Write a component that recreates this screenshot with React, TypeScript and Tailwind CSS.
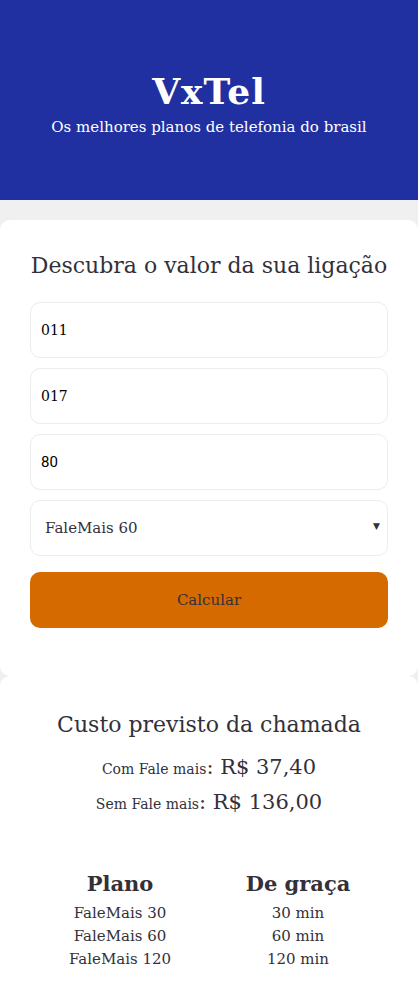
import React, { useState } from 'react';

const plans = [
  { name: 'FaleMais 30', free: '30 min' },
  { name: 'FaleMais 60', free: '60 min' },
  { name: 'FaleMais 120', free: '120 min' },
];

export default function App() {
  const [origin, setOrigin] = useState('011');
  const [destiny, setDestiny] = useState('017');
  const [minutes, setMinutes] = useState('80');
  const [plan, setPlan] = useState('60');

  return (
    <div className="min-h-[999px] bg-[#f0f0f0] font-['DejaVu_Serif',serif] text-[#33303a]">
      <header className="h-[200px] bg-[#2130a1] flex flex-col items-center justify-center text-white pt-[6px]">
        <h1 className="text-[36px] leading-[44px] font-bold tracking-[1px]">VxTel</h1>
        <p className="text-[15px] leading-[20px] mt-[4px]">Os melhores planos de telefonia do brasil</p>
      </header>

      <main className="pt-[20px]">
        <section className="bg-white rounded-[10px] px-[30px] pt-[32px] pb-[48px]">
          <h2 className="text-[22px] leading-[28px] text-center">Descubra o valor da sua ligação</h2>
          <form className="mt-[22px] flex flex-col gap-[10px]" onSubmit={(e) => e.preventDefault()}>
            <input
              value={origin}
              onChange={(e) => setOrigin(e.target.value)}
              className="h-[56px] rounded-[10px] border border-[#ececec] px-[10px] text-[14px] text-black outline-none"
            />
            <input
              value={destiny}
              onChange={(e) => setDestiny(e.target.value)}
              className="h-[56px] rounded-[10px] border border-[#ececec] px-[10px] text-[14px] text-black outline-none"
            />
            <input
              value={minutes}
              onChange={(e) => setMinutes(e.target.value)}
              className="h-[56px] rounded-[10px] border border-[#ececec] px-[10px] text-[15px] text-black font-['Roboto',sans-serif] outline-none"
            />
            <div className="relative">
              <select
                value={plan}
                onChange={(e) => setPlan(e.target.value)}
                className="w-full h-[56px] appearance-none rounded-[10px] border border-[#ececec] bg-white px-[14px] text-[15px] outline-none"
              >
                <option value="30">FaleMais 30</option>
                <option value="60">FaleMais 60</option>
                <option value="120">FaleMais 120</option>
              </select>
              <span className="pointer-events-none absolute right-[8px] top-[20px] text-[9px] text-[#33303a]">▼</span>
            </div>
            <button className="mt-[6px] h-[56px] rounded-[10px] bg-[#d46a00] text-[15px] text-[#33303a]">Calcular</button>
          </form>
        </section>

        <section className="bg-white rounded-[10px] pt-[35px] pb-[38px]">
          <h2 className="text-[22px] leading-[28px] text-center">Custo previsto da chamada</h2>
          <div className="mt-[12px] flex flex-col items-center">
            <p className="leading-[33px]">
              <span className="text-[14px]">Com Fale mais</span>
              <span className="text-[21px]">: R$ 37,40</span>
            </p>
            <p className="leading-[33px]">
              <span className="text-[14px]">Sem Fale mais</span>
              <span className="text-[21px]">: R$ 136,00</span>
            </p>
          </div>

          <div className="mt-[48px] grid grid-cols-[178px_178px] justify-center text-center">
            <h3 className="text-[21px] leading-[30px] font-bold mb-[3px]">Plano</h3>
            <h3 className="text-[21px] leading-[30px] font-bold mb-[3px]">De graça</h3>
            {plans.map((p) => (
              <React.Fragment key={p.name}>
                <span className="text-[15px] leading-[23px]">{p.name}</span>
                <span className="text-[15px] leading-[23px]">{p.free}</span>
              </React.Fragment>
            ))}
          </div>
        </section>
      </main>
    </div>
  );
}
